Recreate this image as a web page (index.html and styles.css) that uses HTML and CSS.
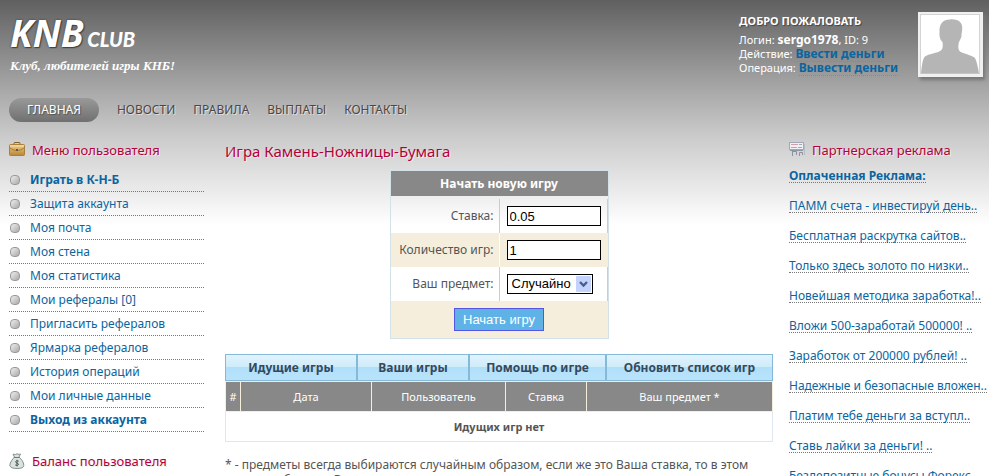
FILE: index.html
```html
<!DOCTYPE html>
<html lang="ru">
<head>
<meta charset="utf-8">
<title>KNB Club</title>
<link rel="stylesheet" href="styles.css">
</head>
<body>
<div class="page">
  <header class="header">
    <div class="brand">
      <a class="logo" href="#">KNB <span class="logo-sub">CLUB</span></a>
      <p class="slogan">Клуб, любителей игры КНБ!</p>
    </div>
    <div class="account">
      <div class="account-info">
        <h2 class="welcome">ДОБРО ПОЖАЛОВАТЬ</h2>
        <p>Логин: <b>sergo1978</b>, ID: 9</p>
        <p>Действие: <a href="#">Ввести деньги</a></p>
        <p>Операция: <a href="#">Вывести деньги</a></p>
      </div>
      <svg class="avatar" viewBox="0 0 65 65" role="img" aria-label="Аватар">
        <rect width="65" height="65" fill="#f0f0f0"/>
        <rect x="2.5" y="2.5" width="59" height="59" fill="#fff" stroke="#d4d4d4"/>
        <path d="M3 61.500C4 52 5 46 7 44.500C10 42 20 41 23 38.500C25 37 25 33 24.500 30C22 28 21 24 21.500 20C21 12 25 7.500 32 7.500C36 7 40 8 42 10C45 13 44.500 18 43.500 22C44 25 42 28 41 30C40 34 40 37 41.500 39C44 41.500 54 43 57 46C59 50 60 56 61 61.500Z" fill="#b5b5b5"/>
      </svg>
    </div>
  </header>

  <nav class="nav">
    <a class="active" href="#">ГЛАВНАЯ</a>
    <a href="#">НОВОСТИ</a>
    <a href="#">ПРАВИЛА</a>
    <a href="#">ВЫПЛАТЫ</a>
    <a href="#">КОНТАКТЫ</a>
  </nav>

  <div class="columns">
    <aside class="side">
      <h2 class="title">
        <svg class="icon" viewBox="0 0 16 16" aria-hidden="true">
          <defs><linearGradient id="case" x2="0" y2="1"><stop stop-color="#f0cd88"/><stop offset="1" stop-color="#b98735"/></linearGradient></defs>
          <path d="M5 3V1.500Q5 .5 6 .5H10Q11 .5 11 1.500V3" fill="none" stroke="#7c5c2c"/>
          <rect x=".5" y="2.500" width="15" height="11" rx="1" fill="url(#case)" stroke="#a87f3c"/>
          <path d="M1 6C4 8 6 8.500 8 8.500S12 8 15 6" fill="none" stroke="#a67b38"/>
          <path d="M1 4H15" stroke="#f8dfa9"/>
          <rect x="7" y="7" width="2" height="2" fill="#5b564c"/>
        </svg>
        Меню пользователя
      </h2>
      <ul class="menu">
        <li><a class="strong" href="#">Играть в К-Н-Б</a></li>
        <li><a href="#">Защита аккаунта</a></li>
        <li><a href="#">Моя почта</a></li>
        <li><a href="#">Моя стена</a></li>
        <li><a href="#">Моя статистика</a></li>
        <li><a href="#">Мои рефералы [0]</a></li>
        <li><a href="#">Пригласить рефералов</a></li>
        <li><a href="#">Ярмарка рефералов</a></li>
        <li><a href="#">История операций</a></li>
        <li><a href="#">Мои личные данные</a></li>
        <li><a class="strong" href="#">Выход из аккаунта</a></li>
      </ul>
      <h2 class="title">
        <svg class="icon" viewBox="0 0 16 16" aria-hidden="true">
          <path d="M5.500 4L4 1.200Q7 2 8 .8Q10 2 11.500 1L10 4C12 6 15 9 14.800 12.500Q14.500 15.500 8 15.500T.8 12.500C.8 9 4 6 5.500 4Z" fill="#dbe3e0" stroke="#84918e"/>
          <path d="M5 4.500H10.500" stroke="#6c7975"/>
          <path d="M9.700 8.200Q7 7 6.500 8.700C6.500 10.300 9.500 9.700 9.500 11.500Q9 13 6.200 12M8 6.800V13.500" fill="none" stroke="#4d5955"/>
        </svg>
        Баланс пользователя
      </h2>
    </aside>

    <main class="main">
      <h1 class="title title-main">Игра Камень-Ножницы-Бумага</h1>
      <form class="game">
        <h2 class="game-head">Начать новую игру</h2>
        <div class="row"><label for="bet">Ставка:</label><div class="cell"><input id="bet" type="text" value="0.05"></div></div>
        <div class="row tinted"><label for="count">Количество игр:</label><div class="cell"><input id="count" type="text" value="1"></div></div>
        <div class="row"><label for="item">Ваш предмет:</label><div class="cell">
          <span class="picker"><select id="item"><option>Случайно</option></select>
          <svg class="arrow" viewBox="0 0 15 16" aria-hidden="true"><rect width="15" height="16" rx="1" fill="#c3d3fc"/><path d="M4 6L7.500 9.500L11 6" fill="none" stroke="#46608c" stroke-width="2.400"/></svg></span>
        </div></div>
        <div class="submit"><button type="button">Начать игру</button></div>
      </form>

      <div class="tabs">
        <button type="button">Идущие игры</button>
        <button type="button">Ваши игры</button>
        <button type="button">Помощь по игре</button>
        <button type="button">Обновить список игр</button>
      </div>
      <table class="games">
        <colgroup><col class="c-num"><col class="c-date"><col class="c-user"><col class="c-bet"><col></colgroup>
        <thead><tr><th>#</th><th>Дата</th><th>Пользователь</th><th>Ставка</th><th>Ваш предмет *</th></tr></thead>
        <tbody><tr><td colspan="5">Идущих игр нет</td></tr></tbody>
      </table>
      <p class="note">* - предметы всегда выбираются случайным образом, если же это Ваша ставка, то в этом случае выбираете Вы сами.</p>
    </main>

    <aside class="side">
      <h2 class="title">
        <svg class="icon" viewBox="0 0 16 16" aria-hidden="true">
          <rect x=".5" y=".5" width="14" height="7" fill="#eef0f4" stroke="#a3a9b5"/>
          <path d="M2 2.500H9M2 5.500H8" stroke="#d79aaa"/><path d="M10 2.500H13M9 5.500H13" stroke="#9aa8c0"/>
          <path d="M1 8.500H14" stroke="#8e96a2"/>
          <path d="M3.500 9V14M3.500 9.500H7.500V13M10.500 14V10.500H13.500V13" fill="none" stroke="#8b939f"/>
          <path d="M15.500 2V13" stroke="#b7bcc5"/>
        </svg>
        Партнерская реклама
      </h2>
      <ul class="ads">
        <li><a class="strong" href="#">Оплаченная Реклама:</a></li>
        <li><a href="#">ПАММ счета - инвестируй день..</a></li>
        <li><a href="#">Бесплатная раскрутка сайтов..</a></li>
        <li><a href="#">Только здесь золото по низки..</a></li>
        <li><a href="#">Новейшая методика заработка!..</a></li>
        <li><a href="#">Вложи 500-заработай 500000! ..</a></li>
        <li><a href="#">Заработок от 200000 рублей! ..</a></li>
        <li><a href="#">Надежные и безопасные вложен..</a></li>
        <li><a href="#">Платим тебе деньги за вступл..</a></li>
        <li><a href="#">Ставь лайки за деньги! ..</a></li>
        <li><a href="#">Бездепозитные бонусы Форекс..</a></li>
      </ul>
    </aside>
  </div>
</div>
</body>
</html>
```
FILE: styles.css
```css
* { box-sizing: border-box; }
html { height: 100%; overflow: hidden; background: #fff; }
body {
  margin: 0 11px 0 0;
  height: 100%;
  background: linear-gradient(#606060 0, #a8a8a8 90px, #cacaca 135px, #fff 225px);
  font: 12px/14px "Noto Sans", sans-serif;
  color: #555;
}
h1, h2, p, ul { margin: 0; padding: 0; font-weight: normal; }
ul { list-style: none; }
a { color: #0a65a0; text-decoration: none; }

.page { padding-left: 9px; }

.header { display: flex; justify-content: space-between; height: 98px; }
.brand { padding: 12px 0 0 1px; }
.logo {
  display: block;
  font: italic bold 37px/42px "Noto Sans", sans-serif;
  color: #fff;
  text-shadow: 0 0 2px #333, 1px 1px 1px #444;
}
.logo-sub { font: italic 900 20px/20px Lato, sans-serif; margin-left: -6px; text-shadow: none; }
.slogan {
  padding-top: 3px;
  font: italic bold 13px/18px "Liberation Serif", serif;
  color: #fff;
}
.account { display: flex; gap: 20px; padding: 12px 6px 0 0; }
.account-info { font-size: 11px; line-height: 14px; color: #fff; }
.account-info b { font-size: 12px; line-height: 12px; }
.account-info a {
  font-size: 12px;
  line-height: 12px;
  font-weight: bold;
  background: linear-gradient(90deg, #888 50%, transparent 50%) left bottom / 2px 1px repeat-x;
}
.welcome {
  padding: 2px 0 5px;
  font: bold 11px/14px "Noto Sans", sans-serif;
  text-shadow: 1px 1px 1px #444;
}
.avatar { width: 65px; height: 65px; box-shadow: 2px 3px 3px #777; }

.nav { display: flex; gap: 18px; line-height: 24px; text-shadow: 1px 1px 0 #ddd; }
.nav a { color: #4c4646; }
.nav .active {
  padding: 0 18px;
  border-radius: 12px;
  background: linear-gradient(#999, #707070);
  color: #fff;
  text-shadow: 1px 1px 1px #555;
}

.columns {
  display: grid;
  grid-template-columns: 195px minmax(0, 1fr) 200px;
  padding-top: 19px;
}
.side { white-space: nowrap; }
.title {
  display: flex;
  align-items: center;
  gap: 7px;
  font-size: 13px;
  line-height: 18px;
  color: #b5003c;
  text-shadow: 1px 1px 0 #eee;
}
.title-main { font-size: 15px; }
.icon { width: 16px; height: 16px; }

.menu { padding: 9px 0 20px; }
.menu li {
  display: flex;
  align-items: center;
  gap: 10px;
  height: 24px;
  padding-left: 1px;
  border-bottom: 1px dotted #777;
}
.menu li::before {
  content: "";
  width: 8px;
  height: 8px;
  border: 1px solid #999;
  border-radius: 4px;
  background: linear-gradient(135deg, #eee, #aaa);
}
.strong { font-weight: bold; }

.ads { padding-top: 9px; }
.ads li { height: 30px; }
.ads a { display: inline-block; height: 15px; line-height: 15px; border-bottom: 1px dotted #777; }

.main { padding: 1px 16px 0 21px; }
.game {
  width: 219px;
  margin: 10px auto 15px;
  border: 1px solid #d5e1e8;
}
.game-head {
  height: 25px;
  margin-bottom: 3px;
  background: #888;
  color: #fff;
  font: bold 12px/25px "Noto Sans", sans-serif;
  text-align: center;
}
.row { display: grid; grid-template-columns: 109px 1fr; height: 34px; line-height: 34px; }
.row label { padding-right: 5px; border-right: 1px solid #ccc; text-align: right; }
.cell { display: flex; align-items: center; padding-left: 7px; border-right: 1px solid #ccc; }
.tinted, .submit { background: #f5eedc; }
.tinted label { border-color: #fff; }
.tinted .cell { border-color: #f5eedc; }
.row input, .row select {
  height: 20px;
  margin: 0;
  border: 1px solid #000;
  border-radius: 0;
  background: #fff;
  color: #000;
  font: 13px/16px "Liberation Sans", sans-serif;
}
.row input { width: 94px; padding: 1px 2px; }
.row select { width: 86px; padding: 0 4px; appearance: none; }
.picker { display: flex; position: relative; }
.arrow { position: absolute; right: 2px; top: 2px; width: 15px; height: 16px; pointer-events: none; }
.submit { display: flex; justify-content: center; padding: 7px 0; }
.submit button {
  height: 23px;
  padding: 0 8px;
  border: 1px solid #5654e4;
  background: #5fb2e6;
  color: #fff;
  font: 13px/20px "Liberation Sans", sans-serif;
}

.tabs { display: grid; grid-template-columns: 132fr 112fr 137fr 167fr; }
.tabs button {
  height: 27px;
  padding: 0;
  border: 1px solid #84bad8;
  background: linear-gradient(#e2f3fd, #cdecfa 48%, #b1dffa 50%, #b9e3fb);
  color: #34495c;
  font: bold 12px/24px "Noto Sans", sans-serif;
}
.games { width: 100%; table-layout: fixed; border-collapse: collapse; }
.c-num { width: 15px; }
.c-date { width: 131px; }
.c-user { width: 134px; }
.c-bet { width: 81px; }
.games th {
  height: 30px;
  padding: 0;
  border: 1px solid #f5eedc;
  background: #888;
  color: #fff;
  font: 11px/14px "Noto Sans", sans-serif;
}
.games td {
  height: 30px;
  padding: 0;
  border: 1px solid #dfe6ef;
  font: bold 11px/14px "Noto Sans", sans-serif;
  text-align: center;
}
.note { padding-top: 15px; line-height: 15px; }
```
